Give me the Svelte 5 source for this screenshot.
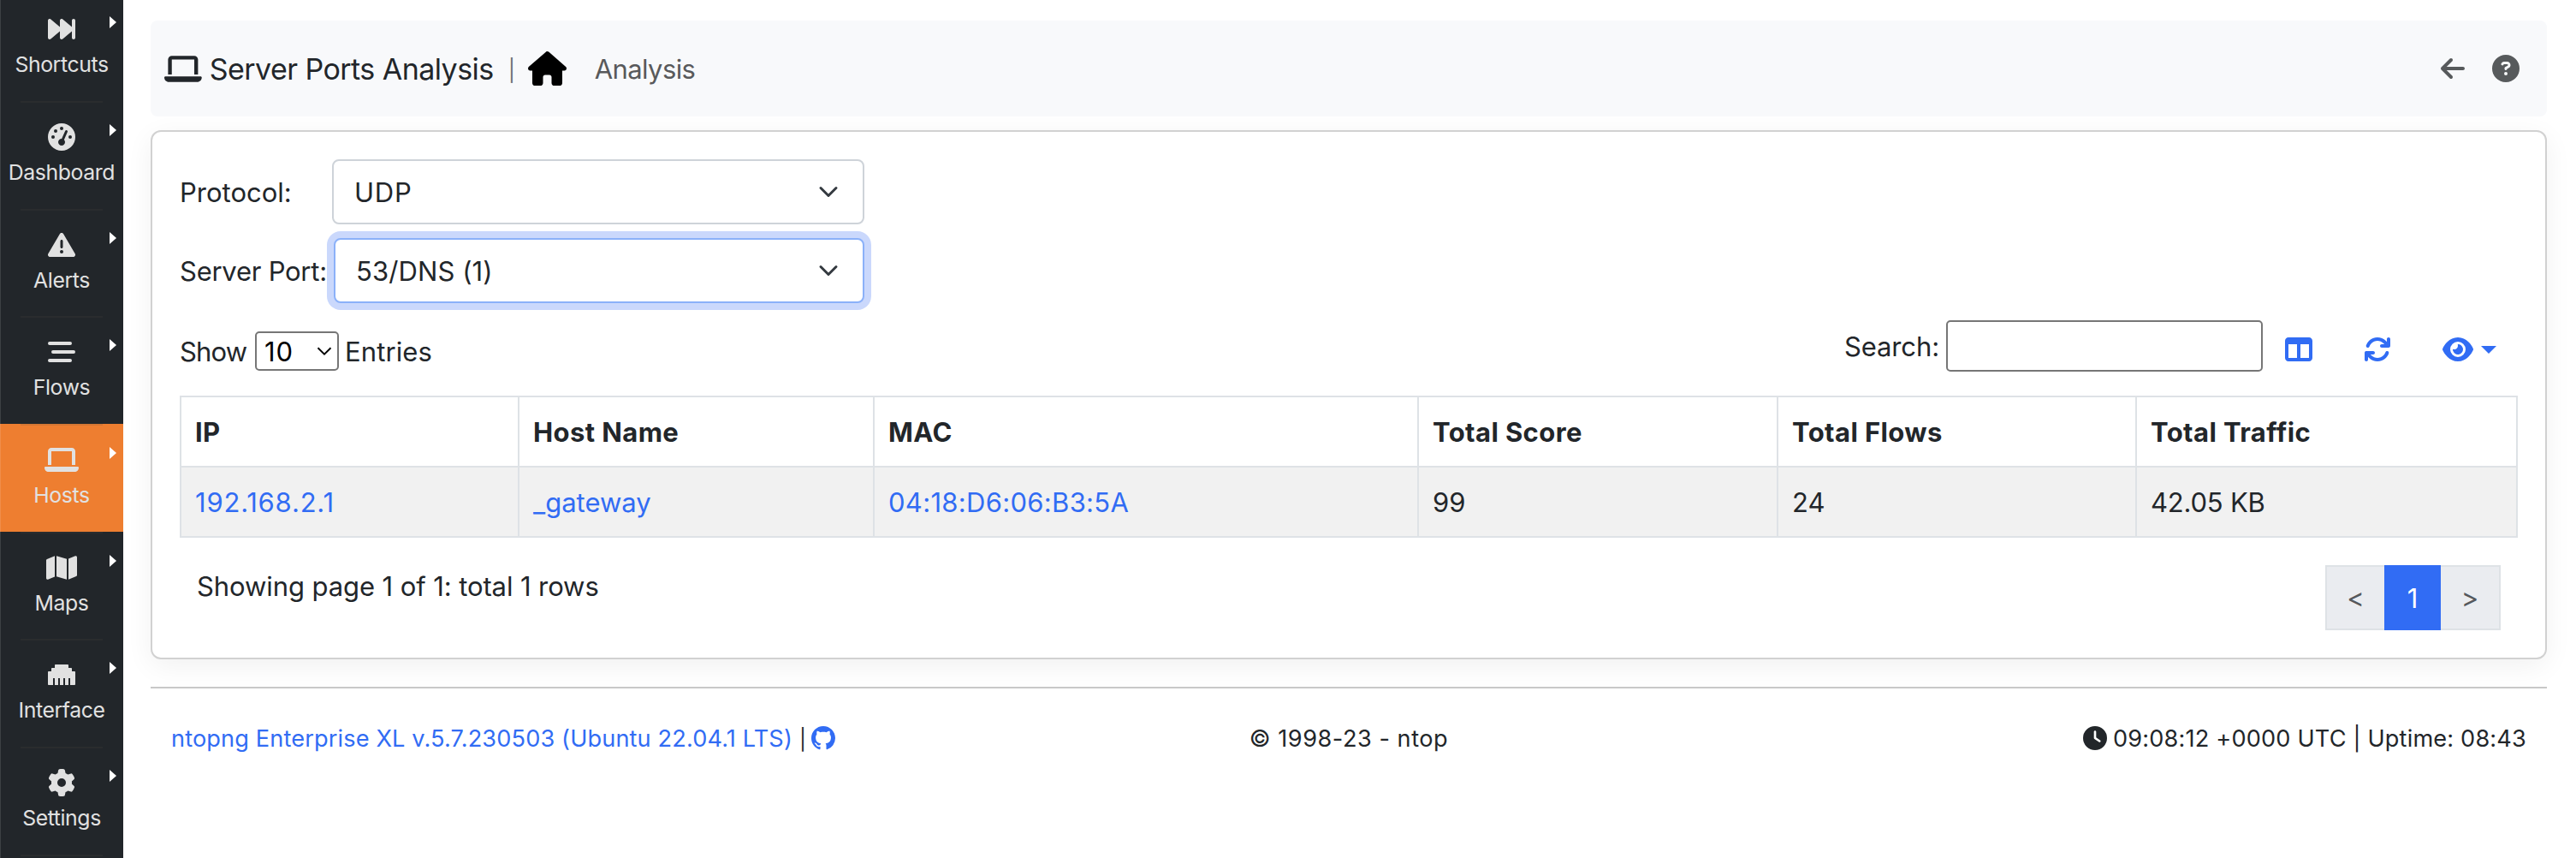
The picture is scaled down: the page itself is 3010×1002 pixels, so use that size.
<script>
  const laptop = 'M128 32C92.7 32 64 60.7 64 96V352h64V96H512V352h64V96c0-35.3-28.7-64-64-64H128zM19.2 384C8.6 384 0 392.6 0 403.2C0 445.6 34.4 480 76.8 480H563.2c42.4 0 76.8-34.4 76.8-76.8c0-10.6-8.6-19.2-19.2-19.2H19.2z';

  // Icons as [viewBox width, path], all 512 units tall
  const icons = {
    forward: [512, 'M18.4 445c11.2 5.3 24.5 3.6 34.1-4.4L224 297.7V416c0 12.4 7.2 23.7 18.4 29s24.5 3.6 34.1-4.4L448 297.7V416c0 17.7 14.3 32 32 32s32-14.3 32-32V96c0-17.7-14.3-32-32-32s-32 14.3-32 32V214.3L276.5 71.4c-9.5-7.9-22.8-9.7-34.1-4.4S224 83.6 224 96V214.3L52.5 71.4c-9.5-7.9-22.8-9.7-34.1-4.4S0 83.6 0 96V416c0 12.4 7.2 23.7 18.4 29z'],
    gauge: [512, 'M0 256a256 256 0 1 1 512 0A256 256 0 1 1 0 256zM288 96a32 32 0 1 0 -64 0 32 32 0 1 0 64 0zM256 416c35.3 0 64-28.7 64-64c0-17.4-6.9-33.1-18.1-44.6L366 161.7c5.3-12.1-.2-26.3-12.3-31.6s-26.3 .2-31.6 12.3L257.9 288c-.6 0-1.3 0-1.9 0c-35.3 0-64 28.7-64 64s28.7 64 64 64zM176 144a32 32 0 1 0 -64 0 32 32 0 1 0 64 0zM96 288a32 32 0 1 0 0-64 32 32 0 1 0 0 64zm352-32a32 32 0 1 0 -64 0 32 32 0 1 0 64 0z'],
    warning: [512, 'M256 32c14.2 0 27.3 7.5 34.5 19.8l216 368c7.3 12.4 7.3 27.7 .2 40.1S486.3 480 472 480H40c-14.3 0-27.6-7.7-34.7-20.1s-7-27.8 .2-40.1l216-368C228.7 39.5 241.8 32 256 32zm0 128c-13.3 0-24 10.7-24 24V296c0 13.3 10.7 24 24 24s24-10.7 24-24V184c0-13.3-10.7-24-24-24zm32 224a32 32 0 1 0 -64 0 32 32 0 1 0 64 0z'],
    stream: [512, 'M32 64H416a32 32 0 0 1 0 64H32a32 32 0 0 1 0-64zM96 224H480a32 32 0 0 1 0 64H96a32 32 0 0 1 0-64zM32 384H416a32 32 0 0 1 0 64H32a32 32 0 0 1 0-64z'],
    laptop: [640, laptop],
    map: [576, 'M384 476.1L192 421.2V35.9L384 90.8V476.1zm32-1.2V88.4L543.1 37.5c15.8-6.3 32.9 5.3 32.9 22.3V394.6c0 9.8-6 18.6-15.1 22.3L416 474.8zM15.1 95.1L160 37.2V423.6L32.9 474.5C17.1 480.8 0 469.2 0 452.2V117.4c0-9.8 6-18.6 15.1-22.3z'],
    ethernet: [512, 'M0 208V432c0 8.800 7.200 16 16 16H96V320h32V448h64V320h32V448h64V320h32V448h64V320h32V448h80c8.800 0 16-7.200 16-16V208c0-8.800-7.200-16-16-16H448V144c0-8.800-7.200-16-16-16H384V80c0-8.800-7.200-16-16-16H144c-8.800 0-16 7.200-16 16v48H80c-8.800 0-16 7.200-16 16v48H16c-8.800 0-16 7.200-16 16z'],
    gear: [512, 'M495.9 166.6c3.2 8.7 .5 18.4-6.4 24.6l-43.3 39.4c1.1 8.3 1.7 16.8 1.7 25.4s-.6 17.1-1.7 25.4l43.3 39.4c6.9 6.2 9.6 15.9 6.4 24.6c-4.4 11.9-9.7 23.3-15.8 34.3l-4.7 8.1c-6.6 11-14 21.4-22.1 31.2c-5.9 7.2-15.7 9.6-24.5 6.8l-55.7-17.7c-13.4 10.3-28.2 18.9-44 25.4l-12.5 57.1c-2 9.1-9 16.3-18.2 17.8c-13.8 2.3-28 3.5-42.5 3.5s-28.7-1.2-42.5-3.5c-9.2-1.5-16.2-8.7-18.2-17.8l-12.5-57.1c-15.8-6.5-30.6-15.1-44-25.4L83.1 425.9c-8.8 2.8-18.6 .3-24.5-6.8c-8.1-9.8-15.5-20.2-22.1-31.2l-4.7-8.1c-6.1-11-11.4-22.4-15.8-34.3c-3.2-8.7-.5-18.4 6.4-24.6l43.3-39.4C64.6 273.1 64 264.6 64 256s.6-17.1 1.7-25.4L22.4 191.2c-6.9-6.2-9.6-15.9-6.4-24.6c4.4-11.9 9.7-23.3 15.8-34.3l4.7-8.1c6.6-11 14-21.4 22.1-31.2c5.9-7.2 15.7-9.6 24.5-6.8l55.7 17.7c13.4-10.3 28.2-18.9 44-25.4l12.5-57.1c2-9.1 9-16.3 18.2-17.8C227.3 1.2 241.5 0 256 0s28.7 1.2 42.5 3.5c9.2 1.5 16.2 8.7 18.2 17.8l12.5 57.1c15.8 6.5 30.6 15.1 44 25.4l55.7-17.7c8.8-2.8 18.6-.3 24.5 6.8c8.1 9.8 15.5 20.2 22.1 31.2l4.7 8.1c6.1 11 11.4 22.4 15.8 34.3zM256 336a80 80 0 1 0 0-160 80 80 0 1 0 0 160z'],
    home: [576, 'M575.8 255.5c0 18-15 32.1-32 32.1h-32l.7 160.2c0 2.7-.2 5.4-.5 8.1V472c0 22.1-17.9 40-40 40H456c-1.1 0-2.2 0-3.3-.1c-1.4 .1-2.8 .1-4.2 .1H416 392c-22.1 0-40-17.9-40-40V448 384c0-17.7-14.3-32-32-32H256c-17.7 0-32 14.3-32 32v64 24c0 22.1-17.9 40-40 40H160 128.1c-1.5 0-3-.1-4.5-.2c-1.2 .1-2.4 .2-3.6 .2H104c-22.1 0-40-17.9-40-40V360c0-.9 0-1.9 .1-2.8V287.6H32c-18 0-32-14-32-32.1c0-9 3-17 10-24L266.4 8c7-7 15-8 22-8s15 2 21 7L564.8 231.5c8 7 12 15 11 24z'],
    back: [448, 'M9.4 233.4c-12.5 12.5-12.5 32.8 0 45.3l160 160c12.5 12.5 32.8 12.5 45.3 0s12.5-32.8 0-45.3L109.2 288 416 288c17.7 0 32-14.3 32-32s-14.3-32-32-32l-306.7 0L214.6 118.6c12.5-12.5 12.5-32.8 0-45.3s-32.800-12.5-45.3 0l-160 160z'],
    help: [512, 'M256 512A256 256 0 1 0 256 0a256 256 0 1 0 0 512zM169.8 165.3c7.9-22.3 29.1-37.3 52.8-37.3h58.3c34.9 0 63.1 28.3 63.1 63.1c0 22.6-12.1 43.5-31.7 54.8L280 264.4c-.2 13-10.9 23.6-24 23.6c-13.3 0-24-10.7-24-24V250.5c0-8.6 4.6-16.5 12.1-20.8l44.3-25.4c4.7-2.7 7.6-7.7 7.6-13.1c0-8.4-6.8-15.1-15.1-15.1H222.6c-3.4 0-6.4 2.1-7.5 5.3l-.4 1.2c-4.4 12.5-18.2 19-30.6 14.6s-19-18.2-14.6-30.6l.4-1.2zM224 352a32 32 0 1 1 64 0 32 32 0 1 1 -64 0z'],
    columns: [512, 'M0 96C0 60.7 28.7 32 64 32H448c35.3 0 64 28.7 64 64V416c0 35.3-28.7 64-64 64H64c-35.3 0-64-28.7-64-64V96zm64 64V416H224V160H64zm384 0H288V416H448V160z'],
    refresh: [512, 'M105.1 202.6c7.7-21.8 20.2-42.3 37.8-59.8c62.5-62.5 163.8-62.5 226.3 0L386.3 160H336c-17.7 0-32 14.3-32 32s14.3 32 32 32H463.5h.4c17.7 0 32-14.3 32-32V64c0-17.7-14.3-32-32-32s-32 14.3-32 32v51.2L414.4 97.6c-87.5-87.5-229.3-87.5-316.8 0C73.2 122 55.6 150.7 44.8 181.4c-5.9 16.7 2.9 34.9 19.5 40.8s34.900-2.9 40.8-19.5zM39 289.3c-5 1.5-9.8 4.2-13.7 8.2c-4 4-6.7 8.8-8.1 14c-.3 1.2-.6 2.5-.8 3.8c-.3 1.7-.4 3.4-.4 5.1V448c0 17.7 14.3 32 32 32s32-14.3 32-32V396.9l17.6 17.5c87.5 87.4 229.3 87.4 316.7 0c24.4-24.4 42.1-53.1 52.9-83.7c5.9-16.7-2.9-34.9-19.5-40.8s-34.9 2.9-40.8 19.5c-7.7 21.8-20.2 42.3-37.8 59.8c-62.5 62.5-163.8 62.5-226.3 0l-.1-.1L125.6 352H176c17.7 0 32-14.3 32-32s-14.3-32-32-32H48.4c-1.6 0-3.2 .1-4.8 .3s-3.1 .5-4.6 1z'],
    eye: [576, 'M288 32c-80.8 0-145.5 36.8-192.6 80.6C48.6 156 17.3 208 2.5 243.7c-3.3 7.9-3.3 16.7 0 24.6C17.3 304 48.6 356 95.4 399.4C142.5 443.2 207.2 480 288 480s145.5-36.8 192.6-80.6c46.8-43.5 78.1-95.4 93-131.1c3.3-7.9 3.3-16.7 0-24.6c-14.9-35.7-46.2-87.7-93-131.1C433.5 68.8 368.8 32 288 32zM144 256a144 144 0 1 1 288 0 144 144 0 1 1 -288 0zm144-64c0 35.3-28.7 64-64 64c-7.1 0-13.9-1.2-20.3-3.3c-5.5-1.8-11.9 1.6-11.7 7.4c.3 6.9 1.3 13.8 3.2 20.7c13.7 51.2 66.4 81.6 117.6 67.9s81.6-66.4 67.9-117.6c-11.1-41.5-47.8-69.4-88.6-71.1c-5.8-.2-9.2 6.1-7.4 11.7c2.1 6.4 3.3 13.2 3.3 20.3z'],
    clock: [512, 'M256 0a256 256 0 1 1 0 512A256 256 0 1 1 256 0zM232 120V256c0 8 4 15.5 10.7 20l96 64c11 7.4 25.9 4.4 33.3-6.7s4.4-25.9-6.7-33.3L280 243.2V120c0-13.3-10.7-24-24-24s-24 10.7-24 24z'],
  };

  const menu = [
    { label: 'Shortcuts', icon: 'forward' },
    { label: 'Dashboard', icon: 'gauge' },
    { label: 'Alerts', icon: 'warning' },
    { label: 'Flows', icon: 'stream' },
    { label: 'Hosts', icon: 'laptop', active: true },
    { label: 'Maps', icon: 'map' },
    { label: 'Interface', icon: 'ethernet' },
    { label: 'Settings', icon: 'gear' },
  ];

  const columns = [
    { title: 'IP', cls: 'c-ip' },
    { title: 'Host Name', cls: 'c-host' },
    { title: 'MAC', cls: 'c-mac' },
    { title: 'Total Score', cls: 'c-score' },
    { title: 'Total Flows', cls: 'c-flows' },
    { title: 'Total Traffic', cls: 'c-traffic' },
  ];
  const rows = [
    { ip: '192.168.2.1', host: '_gateway', mac: '04:18:D6:06:B3:5A', score: '99', flows: '24', traffic: '42.05 KB' },
  ];
</script>

{#snippet icon(name, cls)}
  <svg class="icon {cls}" viewBox="0 0 {icons[name][0]} 512" fill="currentColor" fill-rule="evenodd" aria-hidden="true">
    <path d={icons[name][1]} />
  </svg>
{/snippet}

{#snippet chevron(cls)}
  <svg class={cls} viewBox="0 0 16 16" fill="none" stroke="currentColor" aria-hidden="true"><path d="m2 5 6 6 6-6" /></svg>
{/snippet}

<div class="page">
  <aside class="sidebar">
    <ul class="menu">
      {#each menu as item}
        <li class="item" class:active={item.active}>
          <span class="glyph">{@render icon(item.icon, 'i32')}</span>
          <span class="label">{item.label}</span>
          <span class="arrow"></span>
        </li>
      {/each}
      <li class="item"></li>
    </ul>
  </aside>

  <main class="content">
    <nav class="topbar">
      {@render icon('laptop', 'i-title')}
      <h1 class="title">Server Ports Analysis</h1>
      <span class="pipe">|</span>
      {@render icon('home', 'i-home')}
      <span class="crumb">Analysis</span>
      <div class="actions">
        {@render icon('back', 'i32')}
        {@render icon('help', 'i32')}
      </div>
    </nav>

    <section class="card">
      <div class="filter">
        <span class="name protocol">Protocol:</span>
        <div class="select udp"><span>UDP</span>{@render chevron('chev')}</div>
      </div>
      <div class="filter">
        <span class="name">Server Port:</span>
        <div class="select port focused"><span>53/DNS (1)</span>{@render chevron('chev')}</div>
      </div>

      <div class="toolbar">
        <div class="length">
          <span class="show">Show</span>
          <div class="count"><span>10</span>{@render chevron('mini')}</div>
          <span class="entries">Entries</span>
        </div>
        <div class="tools">
          <span class="search">Search:</span>
          <input class="box" type="text" aria-label="Search" />
          <div class="buttons">
            {@render icon('columns', 'i32')}
            {@render icon('refresh', 'i32')}
            <span class="view">{@render icon('eye', 'i32')}<span class="caret"></span></span>
          </div>
        </div>
      </div>

      <table>
        <thead>
          <tr>{#each columns as c}<th class={c.cls}>{c.title}</th>{/each}</tr>
        </thead>
        <tbody>
          {#each rows as r}
            <tr>
              <td class="link ip">{r.ip}</td>
              <td class="link">{r.host}</td>
              <td class="link mac">{r.mac}</td>
              <td>{r.score}</td>
              <td>{r.flows}</td>
              <td class="traffic">{r.traffic}</td>
            </tr>
          {/each}
        </tbody>
      </table>

      <div class="bottom">
        <span class="info">Showing page 1 of 1: total 1 rows</span>
        <div class="pager">
          <span class="pg prev">&lt;</span>
          <span class="pg current">1</span>
          <span class="pg next">&gt;</span>
        </div>
      </div>
    </section>

    <footer>
      <div class="version">
        <span class="link">ntopng Enterprise XL v.5.7.230503 (Ubuntu 22.04.1 LTS)</span>
        <span class="sep">|</span>
        <svg class="github" viewBox="0 0 16 16" fill="currentColor" aria-hidden="true">
          <path d="M8 0C3.58 0 0 3.58 0 8c0 3.54 2.29 6.53 5.47 7.59.4.07.55-.17.55-.38 0-.19-.01-.82-.01-1.49-2.01.37-2.53-.49-2.69-.94-.09-.23-.48-.94-.82-1.13-.28-.15-.68-.52-.01-.53.63-.01 1.08.58 1.23.82.72 1.21 1.87.87 2.33.66.07-.72.28-.87.51-1.07-1.78-.2-3.64-.89-3.64-3.95 0-.87.31-1.59.82-2.15-.08-.2-.36-1.02.08-2.12 0 0 .67-.21 2.2.82.64-.18 1.32-.27 2-.27s1.36.09 2 .27c1.53-1.04 2.2-.82 2.2-.82.44 1.1.16 1.92.08 2.12.51.56.82 1.27.82 2.15 0 3.07-1.87 3.75-3.65 3.95.29.25.54.73.54 1.48 0 1.07-.01 1.93-.01 2.2 0 .21.15.46.55.38A8.01 8.01 0 0 0 16 8c0-4.42-3.58-8-8-8z" />
        </svg>
      </div>
      <div class="copy">© 1998-23 - ntop</div>
      <div class="clock">{@render icon('clock', 'i28')}<span>09:08:12 +0000 UTC | Uptime: 08:43</span></div>
    </footer>
  </main>
</div>

<style>
  :global(body) { background: #fff; overflow: hidden; }
  .page {
    display: flex;
    height: 1002px;
    overflow: hidden;
    font-family: Inter, "Liberation Sans", sans-serif;
    font-size: 31px;
    line-height: 48px;
    color: #22262a;
    white-space: nowrap;
  }
  .page, .page * { box-sizing: border-box; }
  .icon { display: block; flex: none; }
  .i32 { height: 32px; }
  .i28 { height: 28px; }

  .sidebar { position: relative; flex: none; width: 144px; height: 1002px; overflow: hidden; background: #22262a; }
  .sidebar::after { content: ""; position: absolute; inset: 0 auto 0 0; width: 1px; background: rgba(255, 255, 255, 0.12); }
  .menu { list-style: none; margin: -7.6px 0 0; padding: 0; }
  .item {
    position: relative;
    display: flex;
    flex-direction: column;
    align-items: center;
    height: 125.66px;
    padding-top: 26px;
    color: #e1e1e1;
  }
  .item::before { content: ""; position: absolute; top: 0; left: 24px; width: 96px; height: 2px; background: rgba(90, 80, 70, 0.16); }
  .active { background: #ee7e30; }
  .glyph { height: 32px; }
  .label { margin-top: 9px; font-size: 24.8px; line-height: 32px; letter-spacing: -0.4px; }
  .arrow {
    position: absolute;
    top: 27px;
    left: 128px;
    border: 7px solid transparent;
    border-left: 8px solid #fff;
    border-right: 0;
  }

  .content { flex: 1; padding: 24px 34px 0 32px; }
  .topbar { display: flex; align-items: center; height: 112px; padding: 0 32px 0 16px; border-radius: 8px; background: #f8f9fb; }
  .i-title { height: 35px; }
  .title { margin: 0 0 0 9px; padding-top: 1px; width: 349px; font-size: 34px; font-weight: 400; letter-spacing: -0.55px; }
  .pipe { width: 23px; padding-top: 4px; color: #6c7074; font-size: 25px; }
  .i-home { height: 40px; color: #000; }
  .crumb { margin-left: 33px; padding-top: 1px; color: #58595b; letter-spacing: -0.6px; }
  .actions { display: flex; gap: 32px; margin-left: auto; color: #575a5c; }

  .card {
    height: 618px;
    margin-top: 16px;
    padding: 32px;
    border: 2px solid #d1d1d1;
    border-radius: 12px;
    background: #fff;
    box-shadow: 0 8px 32px rgba(0, 0, 0, 0.06);
  }
  .filter { display: flex; justify-content: space-between; align-items: center; width: 800px; height: 76px; margin-bottom: 16px; letter-spacing: -0.25px; }
  .filter span, .length span, .search { padding-top: 2px; }
  .protocol { letter-spacing: 0; }
  .select {
    display: flex;
    align-items: center;
    justify-content: space-between;
    width: 622px;
    height: 76px;
    padding: 0 28px 0 24px;
    border: 2px solid #ced3d9;
    border-radius: 8px;
    background: #fff;
  }
  .udp { letter-spacing: 0.8px; }
  .port { letter-spacing: 0.1px; }
  .focused { width: 620px; border-color: #8bb1f9; box-shadow: 0 0 0 8px #cad8fc; }
  .chev { width: 24px; height: 24px; stroke-width: 2; stroke-linecap: round; stroke-linejoin: round; color: #343a40; }

  .toolbar { display: flex; justify-content: space-between; height: 108px; margin-top: -16px; }
  .length { display: flex; align-items: center; height: 46px; margin-top: 33px; }
  .show { width: 88px; letter-spacing: -0.8px; }
  .count {
    display: flex;
    align-items: center;
    justify-content: space-between;
    width: 98px;
    height: 46px;
    padding: 0 5px 0 9px;
    border: 2px solid #767676;
    border-radius: 5px;
    color: #000;
    letter-spacing: 1px;
  }
  .mini { width: 20px; height: 20px; stroke-width: 1.5; }
  .entries { margin-left: 7px; letter-spacing: 0.1px; }
  .tools { display: flex; align-items: center; height: 60px; margin-top: 20px; padding-right: 25px; }
  .search { letter-spacing: -0.1px; }
  .box { width: 370px; height: 60px; margin: 0 26px 0 8px; border: 2px solid #767676; border-radius: 5px; background: #fff; font: inherit; }
  .buttons { display: flex; gap: 60px; margin-top: 8px; color: #316cf4; }
  .view { display: flex; align-items: center; gap: 9px; }
  .caret { border: 9px solid transparent; border-top-color: #316cf4; border-bottom: 0; }

  table { table-layout: fixed; width: 2732px; border-collapse: collapse; }
  th, td { height: 82px; padding: 2px 0 0 16px; border: 2px solid #dee2e6; text-align: left; }
  th { font-weight: 700; letter-spacing: 0.4px; }
  tbody tr { background: #f1f1f1; }
  .c-ip { width: 395px; }
  .c-host { width: 415px; }
  .c-mac { width: 636px; }
  .c-score { width: 420px; }
  .c-flows { width: 419px; }
  .link { color: #316cf4; }
  .ip { letter-spacing: 0.8px; }
  .mac { letter-spacing: 0.3px; }
  .traffic { letter-spacing: -0.2px; }

  .bottom { display: flex; justify-content: space-between; padding: 32px 20px 0 20px; }
  .info { padding-top: 1px; letter-spacing: -0.09px; }
  .pager { display: flex; height: 76px; }
  .pg { display: flex; align-items: center; justify-content: center; width: 70px; border: 2px solid #dee2e6; background: #eaecf0; color: #55585c; }
  .prev { width: 69px; border-right: 0; }
  .next { border-left: 0; }
  .current { width: 66px; padding-top: 1px; background: #316cf4; border-color: #316cf4; color: #fff; }

  footer {
    display: grid;
    grid-template-columns: 1fr auto 1fr;
    align-items: center;
    height: 118px;
    margin-top: 32px;
    padding: 2px 24px 0;
    border-top: 2px solid #c8c8c8;
    font-size: 27.15px;
  }
  .version { display: flex; align-items: center; letter-spacing: 0.14px; }
  .sep { margin-left: 8px; padding-top: 2px; font-size: 24px; }
  .github { width: 28px; height: 28px; margin: -2px 0 0 6px; color: #316cf4; }
  .copy { letter-spacing: 0.52px; }
  .clock { display: flex; align-items: center; justify-content: flex-end; gap: 7px; letter-spacing: 0.17px; }
  .i28 { margin-top: -2px; }
</style>
